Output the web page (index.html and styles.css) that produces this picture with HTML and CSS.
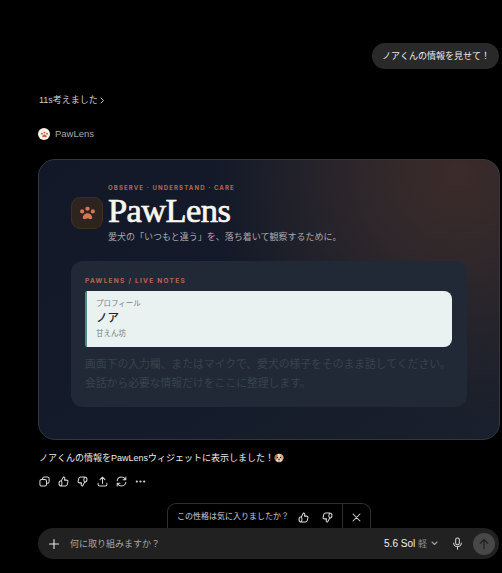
FILE: index.html
```html
<!DOCTYPE html>
<html lang="ja">
<head>
  <meta charset="UTF-8" />
  <meta name="viewport" content="width=device-width, initial-scale=1.0"/>
  <title>PawLens</title>
  <link rel="stylesheet" href="styles.css">
</head>
<body>
  <svg width="0" height="0" class="defs" aria-hidden="true">
    <symbol id="thumb" viewBox="0 0 12 12">
      <path d="M3.7 5.2 5.9 1.1c1.2-.1 1.8.8 1.5 1.9L7 4.5h2.2c1.3 0 1.9.9 1.6 2l-.8 3c-.3 1-1 1.5-2 1.5H3.7C2 11 1.1 10.200 1.100 8.100s.9-2.900 2.600-2.900Zm0 0c1 1.800 1 4 .1 5.700"/>
    </symbol>
    <symbol id="paw" viewBox="0 0 16 14">
      <circle cx="2.300" cy="5.300" r="2.200"/>
      <circle cx="8" cy="2.400" r="2.300"/>
      <circle cx="13.700" cy="5.300" r="2.200"/>
      <path d="M8 7.200c-2.900 0-4.900 2.500-5 4.700-.1 1.800 1.600 2.100 2.800 1.500 1.500-.6 2.900-.6 4.400 0 1.200.6 2.900.3 2.800-1.500C12.900 9.700 10.900 7.200 8 7.200Z"/>
    </symbol>
  </svg>

  <main class="chat">
    <div class="user-message">ノアくんの情報を見せて！</div>

    <div class="thinking">
      <span>11s考えました</span>
      <svg class="icon chevron" viewBox="0 0 5 7"><path d="m1 1 2.500 2.500L1 6"/></svg>
    </div>

    <div class="app-name">
      <span class="app-logo"><svg viewBox="0 0 16 14"><use href="#paw"/></svg></span>
      <span>PawLens</span>
    </div>

    <section class="card">
      <header class="brand">
        <div class="brand-icon"><svg viewBox="0 0 16 14"><use href="#paw"/></svg></div>
        <div>
          <div class="eyebrow">OBSERVE · UNDERSTAND · CARE</div>
          <h1>PawLens</h1>
          <p class="tagline">愛犬の「いつもと違う」を、落ち着いて観察するために。</p>
        </div>
      </header>

      <div class="notes">
        <div class="eyebrow notes-title">PAWLENS / LIVE NOTES</div>
        <div class="profile">
          <div class="label">プロフィール</div>
          <div class="name">ノア</div>
          <div class="label">甘えん坊</div>
        </div>
        <p class="hint">画面下の入力欄、またはマイクで、愛犬の様子をそのまま話してください。<br>会話から必要な情報だけをここに整理します。</p>
      </div>
    </section>

    <p class="reply">ノアくんの情報をPawLensウィジェットに表示しました！<svg class="dog" viewBox="0 0 20 20">
      <circle cx="10" cy="10" r="8.500" fill="#eadac3"/>
      <path d="M5 3C1 4 0 9 2 14c2 1 4-1 4-4l2-7Z" fill="#b9763f"/>
      <path d="M15 3c4 1 5 6 3 11-2 1-4-1-4-4l-2-7Z" fill="#d9a778"/>
      <circle cx="7" cy="9" r="1.300" fill="#24170f"/>
      <circle cx="13" cy="9" r="1.300" fill="#24170f"/>
      <path d="M7.500 11.500h5L10 14.500Z" fill="#24170f"/>
      <path d="M8.500 15h3v2.500h-3Z" fill="#d85d55"/>
    </svg></p>

    <div class="actions">
      <svg class="icon" viewBox="0 0 12 12"><rect x="1" y="3.800" width="7.200" height="7.200" rx="1.800"/><path d="M4 3.500v-.7C4 1.700 4.700 1 5.800 1h3.400C10.300 1 11 1.700 11 2.800v3.400C11 7.300 10.300 8 9.200 8h-.7"/></svg>
      <svg class="icon" viewBox="0 0 12 12"><use href="#thumb"/></svg>
      <svg class="icon down" viewBox="0 0 12 12"><use href="#thumb"/></svg>
      <svg class="icon" viewBox="0 0 12 12"><path d="M6 8V1.300M3.300 4 6 1.300 8.700 4M1.200 7.800v1.400c0 1 .6 1.600 1.600 1.600h6.400c1 0 1.600-.6 1.600-1.600V7.800"/></svg>
      <svg class="icon" viewBox="0 0 12 12"><path d="M1.300 5.200C1.700 2.800 3.600 1.200 6 1.200c2 0 3.500 1 4.400 2.700M10.700 1v3h-3M10.700 6.800c-.4 2.400-2.300 4-4.700 4-2 0-3.500-1-4.400-2.700M1.300 11V8h3"/></svg>
      <svg class="icon dots" viewBox="0 0 12 12"><circle cx="2" cy="6" r="1.200"/><circle cx="6" cy="6" r="1.200"/><circle cx="10" cy="6" r="1.200"/></svg>
    </div>

    <div class="feedback">
      <span class="question">この性格は気に入りましたか？</span>
      <svg class="icon" viewBox="0 0 12 12"><use href="#thumb"/></svg>
      <svg class="icon down" viewBox="0 0 12 12"><use href="#thumb"/></svg>
      <span class="close"><svg class="icon" viewBox="0 0 12 12"><path d="m2.200 2.200 7.600 7.600m0-7.600-7.600 7.600"/></svg></span>
    </div>

    <div class="composer">
      <svg class="icon plus" viewBox="0 0 12 12"><path d="M6 1.500v9M1.500 6h9"/></svg>
      <span class="placeholder">何に取り組みますか？</span>
      <span class="model">5.6 Sol <span>軽</span></span>
      <svg class="icon caret" viewBox="0 0 7 5"><path d="m1 1 2.500 2.500L6 1"/></svg>
      <svg class="icon mic" viewBox="0 0 12 14"><rect x="4" y="1" width="4" height="7.500" rx="2"/><path d="M1.800 6.500c.2 2.500 1.800 4 4.200 4s4-1.500 4.200-4M6 10.500v2.700"/></svg>
      <span class="send"><svg class="icon" viewBox="0 0 12 12"><path d="M6 10.800V1.500M2.200 5.300 6 1.500l3.800 3.800"/></svg></span>
    </div>
  </main>
</body>
</html>
```

FILE: styles.css
```css
* {
  box-sizing: border-box;
}
body {
  margin: 0;
  background: #000;
  color: #ececec;
  font-family: "Liberation Sans", "Noto Sans CJK JP", sans-serif;
  font-size: 9px;
  line-height: 14px;
  overflow: hidden;
}
p, h1 {
  margin: 0;
  white-space: nowrap;
}
svg {
  display: block;
  flex: none;
}
.defs {
  display: none;
}
.icon {
  width: 11px;
  height: 11px;
  fill: none;
  stroke: #d8d8d8;
  stroke-width: 1.100;
  stroke-linecap: round;
  stroke-linejoin: round;
}
.down {
  transform: rotate(180deg);
}
.chat {
  display: flex;
  flex-direction: column;
  width: 462px;
  height: 573px;
  margin-left: 38px;
  padding-top: 43px;
}
.user-message {
  align-self: flex-end;
  width: 127px;
  height: 26px;
  margin-right: 1px;
  padding: 6px 10px;
  border-radius: 13px;
  background: #292929;
  white-space: nowrap;
}
.thinking {
  display: flex;
  align-items: center;
  gap: 2px;
  height: 14px;
  margin: 24px 0 0 1px;
  color: #cfcfcf;
}
.chevron {
  width: 5px;
  height: 7px;
  stroke-width: 0.900;
}
.app-name {
  display: flex;
  align-items: center;
  gap: 5px;
  height: 14px;
  margin-top: 20px;
  color: #a9a9a9;
  font-size: 9.500px;
}
.app-logo {
  display: grid;
  place-items: center;
  width: 12px;
  height: 12px;
  border-radius: 50%;
  background: #f8f1e9;
}
.app-logo svg {
  width: 7px;
  height: 7px;
  fill: #cf603f;
}
.card {
  flex: none;
  height: 281px;
  margin-top: 18px;
  padding: 24px 32px 0;
  border: 1px solid #33363d;
  border-radius: 17px;
  background:
    radial-gradient(circle at 91% 5%, #3c2b29 0, rgba(56, 43, 43, 0.800) 80px, rgba(50, 41, 43, 0.550) 150px, rgba(50, 41, 43, 0) 245px),
    linear-gradient(145deg, #121827, #141b2a 60%, #1a202c);
}
.brand {
  display: flex;
  gap: 5px;
  height: 77px;
}
.brand-icon {
  display: grid;
  place-items: center;
  width: 32px;
  height: 32px;
  margin-top: 13px;
  border: 1px solid #41301f;
  border-radius: 9px;
  background: #2e241f;
}
.brand-icon svg {
  width: 15px;
  height: 14px;
  fill: #d87653;
}
.eyebrow {
  color: #b96650;
  font-family: Inter, sans-serif;
  font-size: 6px;
  font-weight: 700;
  line-height: 8px;
  letter-spacing: 1.150px;
  white-space: nowrap;
}
.notes-title {
  font-size: 6.500px;
  letter-spacing: 1.280px;
}
h1 {
  height: 39px;
  color: #faf6ef;
  font-family: "Liberation Serif", serif;
  font-size: 34.500px;
  font-weight: 400;
  line-height: 36px;
  letter-spacing: -0.600px;
  -webkit-text-stroke: 0.700px #faf6ef;
}
.tagline {
  color: #aaa8a8;
  line-height: 12px;
}
.notes {
  width: 396px;
  height: 146px;
  padding: 16px 15px 0 14px;
  border-radius: 12px;
  background: #212936;
}
.profile {
  height: 56px;
  margin-top: 6px;
  padding: 7px 9px;
  border-left: 2px solid #50898b;
  border-radius: 2px 8px 8px 2px;
  background: #e9f2f1;
}
.label {
  color: #748083;
  font-size: 7.500px;
  line-height: 12px;
}
.name {
  height: 18px;
  color: #1b2930;
  font-family: "Liberation Serif", "Noto Sans CJK JP", serif;
  font-size: 11.500px;
  font-weight: 500;
  line-height: 17px;
}
.hint {
  margin-top: 8px;
  color: #36444c;
  font-size: 10.800px;
  line-height: 19px;
}
.reply {
  display: flex;
  align-items: center;
  height: 14px;
  margin: 11px 0 0 1px;
}
.dog {
  width: 10px;
  height: 10px;
}
.actions {
  display: flex;
  gap: 8.200px;
  margin: 11px 0 0 1px;
}
.dots {
  fill: #d8d8d8;
  stroke: none;
}
.feedback {
  display: flex;
  align-items: center;
  flex: none;
  width: 204px;
  height: 25px;
  margin: 16px 0 0 129px;
  padding: 2px 0 0 9px;
  border: 1px solid #303030;
  border-bottom: 0;
  border-radius: 9px 9px 0 0;
  color: #d0d0d0;
  font-size: 8px;
}
.question {
  width: 121px;
  white-space: nowrap;
}
.feedback .down {
  margin-left: 13px;
}
.close {
  display: flex;
  align-items: center;
  justify-content: center;
  align-self: stretch;
  width: 28px;
  margin: -2px 0 0 auto;
  padding-top: 2px;
  border-left: 1px solid #303030;
}
.composer {
  display: flex;
  align-items: center;
  flex: none;
  height: 31px;
  margin-right: 1px;
  padding: 0 4px 0 10px;
  border-radius: 16px;
  background: #212121;
}
.plus {
  width: 12px;
  height: 12px;
  stroke: #e8e8e8;
}
.placeholder {
  margin-left: 10px;
  color: #a5a5a5;
}
.model {
  margin-left: auto;
  color: #eee;
  font-size: 10px;
}
.model span {
  color: #8c8c8c;
  font-size: 9px;
}
.caret {
  width: 7px;
  height: 5px;
  margin-left: 4px;
  stroke: #a0a0a0;
}
.mic {
  width: 11px;
  height: 13px;
  margin-left: 14px;
}
.send {
  display: grid;
  place-items: center;
  width: 22px;
  height: 22px;
  margin-left: 10px;
  border-radius: 50%;
  background: #474747;
}
.send .icon {
  width: 12px;
  height: 12px;
  stroke: #1f1f1f;
}
```
